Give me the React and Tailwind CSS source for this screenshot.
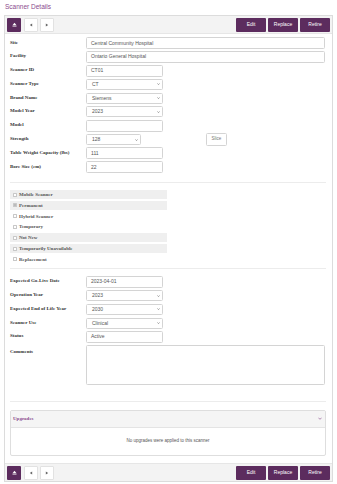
import React from 'react';

const SERIF = { fontFamily: '"Liberation Serif", "Times New Roman", serif' };
const SANS = { fontFamily: '"Liberation Sans", Arial, sans-serif' };
const INPUT_TXT = 'text-[5px] text-[#555] leading-none';

const Chevron = ({ className = '' }) => (
  <svg viewBox="0 0 10 6" className={className} fill="none" stroke="currentColor" strokeWidth="1.6">
    <path d="M1 1l4 4 4-4" />
  </svg>
);

const NavButtons = () => (
  <div className="flex items-center gap-[2px]">
    <button className="w-[14px] h-[14px] bg-[#5c2c5e] rounded-[1px] flex items-center justify-center">
      <svg viewBox="0 0 10 10" className="w-[5px] h-[5px]" fill="white">
        <path d="M5 1.5L9 6.5H1z" />
        <rect x="1" y="7.5" width="8" height="1.5" />
      </svg>
    </button>
    <button className="w-[14px] h-[14px] bg-white border border-[#e2e2e2] rounded-[1px] flex items-center justify-center ml-[1px]">
      <svg viewBox="0 0 10 10" className="w-[4px] h-[4px]" fill="#666">
        <path d="M8 1v8L2 5z" />
      </svg>
    </button>
    <button className="w-[14px] h-[14px] bg-white border border-[#e2e2e2] rounded-[1px] flex items-center justify-center">
      <svg viewBox="0 0 10 10" className="w-[4px] h-[4px]" fill="#666">
        <path d="M2 1v8l6-4z" />
      </svg>
    </button>
  </div>
);

const ActionButtons = () => (
  <div className="flex items-center gap-[2px]">
    {['Edit', 'Replace', 'Retire'].map((t) => (
      <button
        key={t}
        className="w-[30px] h-[14px] bg-[#5c2c5e] rounded-[1px] text-white text-[5px] leading-none flex items-center justify-center"
      >
        {t}
      </button>
    ))}
  </div>
);

const Toolbar = ({ className = '' }) => (
  <div className={`h-[18px] bg-[#f3f3f3] px-[2px] flex items-center justify-between ${className}`}>
    <NavButtons />
    <ActionButtons />
  </div>
);

const TextBox = ({ value = '', w = 'w-[77px]' }) => (
  <div className={`${w} h-[12px] border border-[#d4d4d4] rounded-[1.5px] bg-white flex items-center px-[4px] leading-none`}>
    <span className={INPUT_TXT}>{value}</span>
  </div>
);

const SelectBox = ({ value, w = 'w-[77px]' }) => (
  <div className={`${w} h-[11px] border border-[#d4d4d4] rounded-[1.5px] bg-white flex items-center justify-between pl-[5px] pr-[2px] leading-none`}>
    <span className={INPUT_TXT}>{value}</span>
    <Chevron className="w-[3px] h-[2px] text-[#444]" />
  </div>
);

const Row = ({ label, children }) => (
  <div className="flex items-center h-[12px]">
    <div className="w-[76px] shrink-0 pb-[2px] text-[5px] leading-none font-semibold text-[#333]" style={SERIF}>
      {label}
    </div>
    {children}
  </div>
);

const CHECKS = [
  { label: 'Mobile Scanner', shade: true },
  { label: 'Permanent', shade: true, checked: true },
  { label: 'Hybrid Scanner' },
  { label: 'Temporary' },
  { label: 'Not New', shade: true },
  { label: 'Temporarily Unavailable', shade: true },
  { label: 'Replacement' },
];

export default function App() {
  return (
    <div className="w-[337px] h-[484px] bg-white overflow-hidden" style={SANS}>
      <div className="h-[15px] pl-[5px] pt-[4px] leading-none">
        <h1 className="text-[6.5px] leading-none text-[#8a4a8d]">Scanner Details</h1>
      </div>

      <div className="ml-[4px] w-[329px] h-[467px] border border-[#dcdcdc] flex flex-col">
        <Toolbar className="border-b border-[#e6e6e6]" />

        <div className="flex-1 pl-[5px] pr-[6px]">
          {/* main details */}
          <div className="pt-[3px] flex flex-col gap-[1.8px]">
            <Row label="Site">
              <TextBox value="Central Community Hospital" w="w-[239px]" />
            </Row>
            <Row label="Facility">
              <TextBox value="Ontario General Hospital" w="w-[239px]" />
            </Row>
            <Row label="Scanner ID">
              <TextBox value="CT01" />
            </Row>
            <Row label="Scanner Type">
              <SelectBox value="CT" />
            </Row>
            <Row label="Brand Name">
              <SelectBox value="Siemens" />
            </Row>
            <Row label="Model Year">
              <SelectBox value="2023" />
            </Row>
            <Row label="Model">
              <TextBox />
            </Row>
            <Row label="Strength">
              <SelectBox value="128" w="w-[55px]" />
              <div className="ml-[65px] w-[21px] h-[13px] border border-[#d4d4d4] rounded-[1.5px] flex items-center justify-center leading-none">
                <span className="text-[4.5px] text-[#777] leading-none">Slice</span>
              </div>
            </Row>
            <Row label="Table Weight Capacity (lbs)">
              <TextBox value="111" />
            </Row>
            <Row label="Bore Size (cm)">
              <TextBox value="22" />
            </Row>
          </div>

          <div className="mt-[9px] border-t border-[#ececec]" />

          {/* flags */}
          <div className="pt-[6px] flex flex-col" style={SERIF}>
            {CHECKS.map((c) => (
              <div key={c.label} className="h-[10.8px] flex items-center leading-none">
                <div className={`w-[157px] h-[9px] flex items-center pl-[3px] gap-[2px] ${c.shade ? 'bg-[#efefef]' : ''}`}>
                  <span className="w-[4px] h-[4px] border border-[#c8c8c8] bg-white rounded-[0.5px] flex items-center justify-center">
                    {c.checked && <span className="w-[2px] h-[2px] bg-[#bbb]" />}
                  </span>
                  <span className="text-[5px] font-semibold text-[#555] leading-none">{c.label}</span>
                </div>
              </div>
            ))}
          </div>

          <div className="mt-[3px] border-t border-[#ececec]" />

          {/* dates & status */}
          <div className="pt-[7px] flex flex-col gap-[1.8px]">
            <Row label="Expected Go-Live Date">
              <TextBox value="2023-04-01" />
            </Row>
            <Row label="Operation Year">
              <SelectBox value="2023" />
            </Row>
            <Row label="Expected End of Life Year">
              <SelectBox value="2030" />
            </Row>
            <Row label="Scanner Use">
              <SelectBox value="Clinical" />
            </Row>
            <Row label="Status">
              <TextBox value="Active" />
            </Row>
            <div className="flex items-start">
              <div className="w-[76px] shrink-0 pt-[4px] text-[5px] leading-none font-semibold text-[#333]" style={SERIF}>
                Comments
              </div>
              <div className="w-[239px] h-[40px] border border-[#d4d4d4] rounded-[1.5px] bg-white" />
            </div>
          </div>

          <div className="mt-[16px] border-t border-[#ececec]" />

          {/* upgrades */}
          <div className="mt-[8px] border border-[#dedede] rounded-[2px] overflow-hidden">
            <div className="h-[17px] bg-[#f5f5f5] border-b border-[#e4e4e4] flex items-center justify-between pl-[2px] pr-[3px] leading-none">
              <span className="text-[5px] font-bold text-[#8a4a8d] leading-none" style={SERIF}>Upgrades</span>
              <Chevron className="w-[4px] h-[3px] text-[#8a4a8d]" />
            </div>
            <div className="h-[27px] flex items-center justify-center leading-none">
              <span className="text-[4.5px] text-[#555] leading-none">No upgrades were applied to this scanner</span>
            </div>
          </div>
        </div>

        <Toolbar className="border-t border-[#e6e6e6]" />
      </div>
    </div>
  );
}
